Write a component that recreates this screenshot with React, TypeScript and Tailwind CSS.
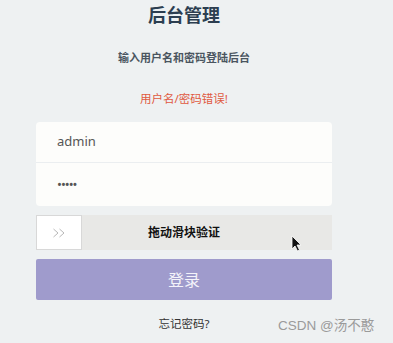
import React from "react";

export default function App() {
  return (
    <div
      className="relative w-[393px] h-[343px] overflow-hidden bg-[#eef1f2]"
      style={{ fontFamily: '"Noto Sans", "Noto Sans CJK SC", sans-serif' }}
    >
      <div className="ml-[36px] w-[296px] flex flex-col items-center">
        <h1 className="mt-[3px] text-[18px] leading-[24px] font-bold text-[#2c3e50]">后台管理</h1>
        <p className="mt-[23px] text-[11px] leading-[16px] font-bold text-[#4a5560]">
          输入用户名和密码登陆后台
        </p>
        <p className="mt-[25px] text-[11.5px] leading-[16px] text-[#e0593f]">用户名/密码错误!</p>

        {/* 输入框 */}
        <div className="mt-[15px] w-full rounded-[4px] bg-[#fdfdfb] flex flex-col">
          <div className="h-[41px] flex items-center pl-[21px] border-b border-[#ebeef0] text-[13px] text-[#555]">
            admin
          </div>
          <div className="h-[43px] flex items-center pl-[21px] text-[13px] text-[#555] tracking-[-1px]">
            •••••
          </div>
        </div>

        {/* 滑块 */}
        <div className="mt-[9px] w-full h-[35px] bg-[#e8e8e6] relative flex items-center">
          <div className="absolute left-0 top-0 w-[46px] h-[35px] bg-white border border-[#d8d8d8] flex items-center justify-center">
            <svg width="14" height="10" viewBox="0 0 14 10" fill="none" stroke="#b8b8b8" strokeWidth="1">
              <path d="M1.5 1 L6 5 L1.5 9" />
              <path d="M7.5 1 L12 5 L7.5 9" />
            </svg>
          </div>
          <span className="w-full text-center text-[12px] font-bold text-[#111]">拖动滑块验证</span>
        </div>

        <button className="mt-[9px] w-full h-[41px] rounded-[2px] bg-[#9f9bcc] text-[16px] text-[#f4f3fa]">
          登录
        </button>

        <p className="mt-[15px] text-[11.5px] text-[#333]">忘记密码?</p>
      </div>

      {/* 鼠标指针 */}
      <svg className="absolute left-[291px] top-[235px]" width="12" height="17" viewBox="0 0 12 17">
        <path d="M1 1 L1 14 L4 11 L6.5 16 L8.5 15 L6 10 L10 10 Z" fill="#111" stroke="#fff" strokeWidth="0.8" />
      </svg>

      <span
        className="absolute left-[278px] top-[316px] text-[13.5px] text-[#9a9a9a]"
        style={{ fontFamily: '"Liberation Sans", "Noto Sans CJK SC", sans-serif' }}
      >
        CSDN @汤不憨
      </span>
    </div>
  );
}
